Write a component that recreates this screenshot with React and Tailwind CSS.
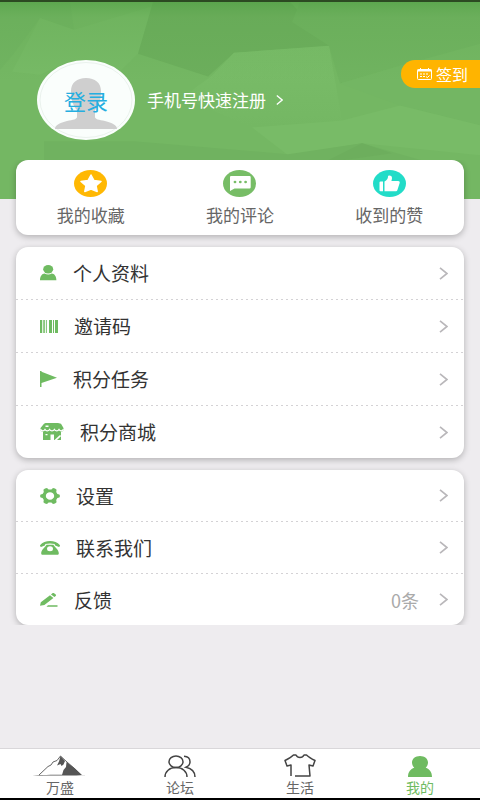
import React from 'react';

const Chevron = ({ className }) => (
  <svg viewBox="0 0 9 13" fill="none" stroke="currentColor" strokeWidth="1.7" className={className}>
    <path d="M1 .8 8 6.5 1 12.2" />
  </svg>
);

const UserIcon = () => (
  <svg viewBox="0 0 17 16" className="h-4 w-[17px]" fill="currentColor">
    <ellipse cx="8.2" cy="4.2" rx="5" ry="4.2" />
    <path d="M0 15.2c0-4 2.2-6.400 4.600-6.600 2.200 1.200 5 1.200 7.200 0 2.400.2 4.600 2.600 4.600 6.600z" />
  </svg>
);

const BarcodeIcon = () => (
  <svg viewBox="0 0 18 13" className="h-[13px] w-[18px]" fill="currentColor">
    <path d="M0 0h2.200v13H0zM3.300 0h1.500v13H3.300zM5.900 0h.9v13h-.9zM9 0h3v13H9zM13 0h1v13h-1zM15 0h3v13h-3z" />
  </svg>
);

const FlagIcon = () => (
  <svg viewBox="0 0 17 16" className="h-4 w-[17px]" fill="currentColor">
    <path d="M0 0h1.500v.7L17 6.700 1.500 12v4H0z" />
  </svg>
);

const ShopIcon = () => (
  <svg viewBox="0 0 24 18" className="h-[18px] w-6">
    <path fill="currentColor" d="M5.500 0h12.500l3 .8 2.500 4.200v1.500c0 1.400-1 2-2.500 2V17H3V8.500C1.500 8.500.5 7.900.5 6.500V5L4 .8z" />
    <path
      fill="none"
      stroke="#fff"
      strokeWidth="1.300"
      d="M.5 6.300c1 2 3.500 2 4.500.2 1 1.700 3.400 1.700 4.600 0 1.200 1.700 3.600 1.700 4.800 0 1.200 1.700 3.600 1.700 4.600 0 1 1.800 3.500 1.800 4.500-.2"
    />
    <path fill="#fff" d="M5.500 2.500h3V4h-3zM10.500 11.500h3.500V17h-3.500zM5.500 11h2v1.300h-2zM14.500 17l5.500-5 1.200 1-4.200 4z" />
  </svg>
);

const GearIcon = () => (
  <svg viewBox="0 0 20 16" className="h-4 w-5">
    <path
      fill="currentColor"
      fillRule="evenodd"
      d="M5 .5 7 0l1.600 1.500h2.800L13 0l2 .5 1.600 1.200-.4 2.300 1.200 1.900 2 .6.600 1.500-.6 1.500-2 .6-1.200 1.900.4 2.300L15 15.500l-2 .5-1.600-1.500H8.600L7 16l-2-.5-1.600-1.200.4-2.300-1.200-1.900-2-.6L0 8l.6-1.500 2-.6L3.800 4l-.4-2.300zM10 4.300C7.700 4.300 5.800 6 5.800 8s1.900 3.700 4.200 3.700 4.200-1.700 4.200-3.700-1.900-3.700-4.200-3.700z"
    />
  </svg>
);

const PhoneIcon = () => (
  <svg viewBox="0 0 20 14" className="h-3.5 w-5">
    <path
      fill="currentColor"
      d="M0 4.300C2.500 1 6 0 10 0s7.500 1 10 4.300c0 1.300-.8 1.900-1.700 1.500l-3-1.200c-.6-.3-.6-.8-.5-1.500-2.800-.8-6.800-.8-9.600 0 .1.700.1 1.200-.5 1.500l-3 1.200C.8 6.200 0 5.600 0 4.300z"
    />
    <path fill="currentColor" d="M6.500 3.700h7c1 2.400 5.300 4.700 5.300 8.600 0 1-.6 1.500-1.500 1.500H2.700c-.9 0-1.500-.5-1.500-1.500C1.200 8.400 5.500 6.100 6.500 3.700z" />
    <ellipse cx="10" cy="7.700" rx="3" ry="2.500" fill="#fff" />
  </svg>
);

const PenIcon = () => (
  <svg viewBox="0 0 18 14" className="h-3.5 w-[18px]" fill="currentColor">
    <path d="M0 12.800.800 9.300 10 2.200l3.400 2.800-9 7zM11 1.400 12.400.3c.6-.4 1.200-.4 1.700 0l1.600 1.300c.5.5.5 1 0 1.400L14.400 4.100zM8 12.200h9.500v1.500H6.500z" />
  </svg>
);

const MountainIcon = () => (
  <svg viewBox="0 0 60 22" className="h-[22px] w-[60px]">
    <path d="M9 20 18 11.500l3-1.500 2-3 4-1.500L30.500 1 37 7l8 7 6 6" fill="none" stroke="#555" strokeWidth=".9" />
    <path fill="#555" d="m30.500 1 4.500 5-1.500 3.500-2 1.500-1-2-3.500 1.500 2-4z" />
    <path fill="#555" d="m36.500 7 8.500 6.500 7 6.500H32l1.500-5 2.500-3z" />
    <path fill="#555" d="M0 21c12-1.800 46-1.800 60 0-14-.6-46-.6-60 0z" />
  </svg>
);

const ForumIcon = () => (
  <svg viewBox="0 0 32 22" className="h-[22px] w-8" fill="none" stroke="#444" strokeWidth="1.500">
    <ellipse cx="12" cy="6.800" rx="7" ry="5.800" />
    <path d="M1 22c0-5.500 4.500-9.400 11-9.400S23 16.500 23 22" />
    <path d="M20 1.200c4 .2 6 2.700 6 5.600 0 2.600-1.600 4.400-4 5.500 5.500 1.200 9 4.700 9 9.700" />
  </svg>
);

const ShirtIcon = () => (
  <svg viewBox="0 0 32 23" className="h-[23px] w-8" fill="none" stroke="#444" strokeWidth="1.500" strokeLinejoin="round">
    <path d="M7 22V11l-4 1L1 6.500C4 5 7 3.500 9.500 1H12c1.500 3.300 6.500 3.300 8 0h2.500C25 3.500 28 5 31 6.500L29 12l-4-1 1 11H11" />
  </svg>
);

const MeIcon = () => (
  <svg viewBox="0 0 24 22" className="h-[22px] w-6" fill="currentColor">
    <path d="M12 1c4.600 0 8 2.800 8 6.500 0 2.300-1 4-2.300 5.300C21.500 14.200 24 17 24 22H0c0-5 2.500-7.800 6.300-9.200C5 11.500 4 9.800 4 7.500 4 3.800 7.400 1 12 1z" />
  </svg>
);

const shortcuts = [
  {
    label: '我的收藏',
    icon: (
      <svg viewBox="0 0 33 27" className="h-[27px] w-[33px]">
        <ellipse cx="16.500" cy="13.500" rx="16.500" ry="13.500" fill="#ffb803" />
        <path
          d="m17 5 3 5.500 7 1-5 4.200 1.200 5.800L17 19l-6.200 2.500 1.200-5.800-5-4.200 7-1z"
          fill="#fff"
          stroke="#fff"
          strokeWidth="1.500"
          strokeLinejoin="round"
        />
      </svg>
    ),
  },
  {
    label: '我的评论',
    icon: (
      <svg viewBox="0 0 33 27" className="h-[27px] w-[33px]">
        <ellipse cx="16.500" cy="13.500" rx="16.500" ry="13.500" fill="#77bd66" />
        <path d="M8 6h18.500q1.200 0 1.200 1.200v10q0 1.200-1.200 1.200H11.500L7 21V7.200Q7 6 8 6z" fill="#fff" />
        <g fill="#77bd66">
          <ellipse cx="12" cy="12" rx="1.400" ry="1.200" />
          <ellipse cx="17.300" cy="12" rx="1.400" ry="1.200" />
          <ellipse cx="22.600" cy="12" rx="1.400" ry="1.200" />
        </g>
      </svg>
    ),
  },
  {
    label: '收到的赞',
    icon: (
      <svg viewBox="0 0 33 27" className="h-[27px] w-[33px]">
        <ellipse cx="16.500" cy="13.500" rx="16.500" ry="13.500" fill="#22dcc8" />
        <path
          d="M6.500 12.500q0-1 1-1H10v9.800H7.500q-1 0-1-1zM11.500 11.500c2.500-1.200 3.500-3 3.500-5 0-1.500 4-1.500 4 1.500 0 1.200-.3 2-.6 3h6.600c1.800 0 2 1.300 1.500 2.500l-2 6.300c-.3 1-1 1.500-2 1.500h-11z"
          fill="#fff"
        />
      </svg>
    ),
  },
];

const accountItems = [
  { label: '个人资料', icon: <UserIcon /> },
  { label: '邀请码', icon: <BarcodeIcon /> },
  { label: '积分任务', icon: <FlagIcon /> },
  { label: '积分商城', icon: <ShopIcon /> },
];

const otherItems = [
  { label: '设置', icon: <GearIcon /> },
  { label: '联系我们', icon: <PhoneIcon /> },
  { label: '反馈', icon: <PenIcon />, extra: '0条' },
];

const tabs = [
  { label: '万盛', icon: <MountainIcon /> },
  { label: '论坛', icon: <ForumIcon /> },
  { label: '生活', icon: <ShirtIcon /> },
  { label: '我的', icon: <MeIcon />, active: true },
];

function MenuCard({ items, rowClass }) {
  return (
    <ul className="mt-3 rounded-xl bg-white shadow-[0_2px_6px_rgba(0,0,0,0.25)]">
      {items.map((item, index) => (
        <li key={item.label}>
          {index > 0 && (
            <svg className="block h-px w-full" aria-hidden="true">
              <line x1="0" y1="0.5" x2="100%" y2="0.5" stroke="#d4d2d5" strokeDasharray="2 3" />
            </svg>
          )}
          <button className={`flex w-full cursor-pointer items-center pl-6 pr-4 text-left ${rowClass}`}>
            <span className="text-[#6fbb61]">{item.icon}</span>
            <span className="ml-4 text-[19px] leading-6 text-[#333]">{item.label}</span>
            {item.extra && <span className="ml-auto text-lg leading-6 text-[#aaa]">{item.extra}</span>}
            <Chevron className={`h-[13px] w-[9px] text-[#b9b7ba] ${item.extra ? 'ml-5' : 'ml-auto'}`} />
          </button>
        </li>
      ))}
    </ul>
  );
}

export default function App() {
  return (
    <div className="flex min-h-screen flex-col bg-[#eeecef] font-['Noto_Sans_CJK_SC',sans-serif]">
      <header className="relative border-t-2 border-[#2c4a22] bg-[#74b763] pb-[59px] pt-[58px]">
        <svg
          className="absolute inset-0 h-full w-full"
          viewBox="0 0 480 198"
          preserveAspectRatio="none"
          aria-hidden="true"
        >
          <defs>
            <linearGradient id="facet" x1="0" y1="0" x2="0" y2="1">
              <stop offset="0" stopColor="#7abd69" />
              <stop offset="1" stopColor="#74b763" />
            </linearGradient>
            <linearGradient id="shade" x1="0" y1="0" x2="0" y2="1">
              <stop offset="0" stopColor="#4f9f43" stopOpacity=".6" />
              <stop offset=".08" stopColor="#5fa650" stopOpacity=".3" />
              <stop offset=".4" stopColor="#5fa650" stopOpacity="0" />
            </linearGradient>
          </defs>
          <path fill="#71b461" d="M0 0h70l4 28L40 16 12 54 0 68z" />
          <path fill="#77ba66" d="m74 28 79-24-15 48-22 22-48-14-28 13-28-3 28-54z" />
          <path fill="#6cae5c" d="M153 0h137l42 44-98 7-26 24-70-23z" />
          <path fill="url(#facet)" d="m234 51 95-7 13 75-90 7-70-30 30-22z" />
          <path fill="#70b360" d="m300 0-8 20 37 24 11 38 60-18 80-22V0z" />
          <path fill="#73b663" d="m340 82 60-18h80v60l-80-20z" />
          <path fill="#78bb67" d="m252 126 90-7 58-15 80 20v30l-118-12-74 12z" />
          <path fill="#70b260" d="M44 140h90l154 13 74-11 70 20v36H44z" />
          <path fill="#6dae5d" d="m362 142 30 10-70 10z" />
          <rect width="480" height="198" fill="url(#shade)" />
        </svg>

        <div className="relative flex items-start pl-[37px]">
          <button className="grid h-20 w-[98px] cursor-pointer place-items-center">
            <svg viewBox="0 0 98 80" className="col-start-1 row-start-1 h-20 w-[98px]" aria-hidden="true">
              <ellipse cx="49" cy="40" rx="49" ry="40" fill="#fafefc" />
              <ellipse cx="49" cy="40" rx="46" ry="37.500" fill="none" stroke="#dfe9e2" strokeWidth=".6" />
              <path
                fill="#cfcfcf"
                d="M49 18c9 0 15 5 15 13 0 9-2 15-6 19v7c0 2 4 3 10 4 7 2 12 4 12 8H18c0-4 5-6 12-8 6-1 10-2 10-4v-7c-4-4-6-10-6-19 0-8 6-13 15-13z"
              />
            </svg>
            <span className="col-start-1 row-start-1 text-[22px] leading-6 text-[#25aee0]">登录</span>
          </button>
          <a href="#register" className="ml-3 flex items-center self-center text-[17px] leading-6 text-white">
            手机号快速注册
            <Chevron className="ml-2.5 h-2.5 w-[7px]" />
          </a>
          <button className="ml-auto flex h-7 cursor-pointer items-center gap-1 rounded-l-full bg-[#ffb400] pl-4 pr-3 text-base leading-6 text-white">
            <svg viewBox="0 0 15 12" className="h-3 w-[15px]" fill="none" stroke="currentColor">
              <rect x=".5" y="1.500" width="14" height="10" rx="1" />
              <path strokeWidth="2" d="M.5 2.500h14" />
              <path d="M3.500 0v2M11.500 0v2" />
              <path strokeDasharray="2 1" d="M3 6h9M3 8.500h5" />
              <path d="m9 8.500 1.300 1.200 2.200-2.200" />
            </svg>
            签到
          </button>
        </div>
      </header>

      <main className="relative -mt-[39px] overflow-hidden px-4">
        <nav className="grid grid-cols-3 rounded-xl bg-white shadow-[0_2px_6px_rgba(0,0,0,0.25)]">
          {shortcuts.map((item) => (
            <button key={item.label} className="flex cursor-pointer flex-col items-center pb-2 pt-2.5">
              {item.icon}
              <span className="mt-1.5 text-[17px] leading-6 text-[#666]">{item.label}</span>
            </button>
          ))}
        </nav>
        <MenuCard items={accountItems} rowClass="h-[52px]" />
        <MenuCard items={otherItems} rowClass="h-[51px]" />
      </main>

      <nav className="mt-auto grid grid-cols-4 border-b-2 border-t border-b-black border-t-[#d9d7da] bg-white">
        {tabs.map((tab) => (
          <a
            key={tab.label}
            href="#tab"
            className={`flex flex-col items-center pt-1.5 text-sm ${tab.active ? 'text-[#6fbb61]' : 'text-[#666]'}`}
          >
            <span className="flex h-[22px] items-end">{tab.icon}</span>
            <span className="leading-[21px]">{tab.label}</span>
          </a>
        ))}
      </nav>
    </div>
  );
}
